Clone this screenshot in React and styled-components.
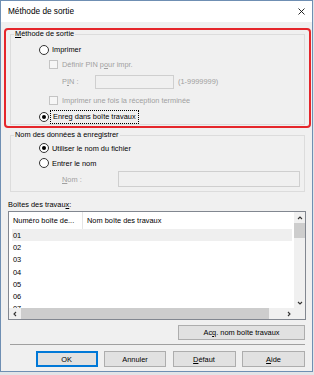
import React from "react";
import styled, { createGlobalStyle } from "styled-components";

const GlobalStyle = createGlobalStyle`
  html, body {
    margin: 0;
    padding: 0;
  }
  body {
    width: 314px;
    height: 375px;
    overflow: hidden;
    background: #e2e4e7;
    font-family: "Liberation Sans", Arial, sans-serif;
  }
  * {
    box-sizing: border-box;
  }
`;

const Window = styled.div`
  width: 313px;
  height: 372px;
  border: 1px solid #6f8fb3;
  background: #f0f0f0;
  display: flex;
  flex-direction: column;
  font-size: 7.4px;
  color: #000;
`;

const TitleBar = styled.div`
  height: 21px;
  flex: none;
  background: #fff;
  display: flex;
  align-items: center;
  justify-content: space-between;
  padding: 0 7px 0 7px;
  font-size: 8.25px;
`;

const Body = styled.div`
  flex: 1;
  display: flex;
  flex-direction: column;
  padding: 6px 6px 0 7px;
`;

const Highlight = styled.div`
  margin: 0 -5px 0 -4px;
  height: 100px;
  border: 2px solid #e5262b;
  border-radius: 4px;
  padding: 0 4px 1px 4px;
`;

const Group = styled.fieldset`
  margin: ${(p) => p.$margin || "0"};
  padding: 0 0 ${(p) => p.$pb || 0}px 0;
  border: 1px solid #dcdcdc;
  min-width: 0;
  display: flex;
  flex-direction: column;
`;

const GroupLabel = styled.legend`
  margin-left: 3px;
  padding: 0 1px;
  font-size: 7.4px;
  line-height: 8px;
`;

const Row = styled.div`
  height: ${(p) => p.$h}px;
  margin-top: ${(p) => p.$mt || 0}px;
  padding-left: ${(p) => p.$indent}px;
  display: flex;
  align-items: center;
  flex: none;
  white-space: nowrap;
  color: ${(p) => (p.$disabled ? "#a0a0a0" : "#000")};
`;

const Radio = styled.span`
  width: 10px;
  height: 10px;
  border-radius: 50%;
  border: 1px solid #333;
  background: #fff;
  display: inline-flex;
  align-items: center;
  justify-content: center;
  flex: none;
  margin-right: 3px;
  &::after {
    content: "";
    width: 4px;
    height: 4px;
    border-radius: 50%;
    background: #000;
    display: ${(p) => (p.$checked ? "block" : "none")};
  }
`;

const Check = styled.span`
  width: 9px;
  height: 9px;
  border: 1px solid #c4c4c4;
  background: #f6f6f6;
  flex: none;
  margin-right: 4px;
`;

const Focus = styled.span`
  outline: 1px dotted #000;
  outline-offset: 1px;
  padding: 0 1px;
  line-height: 10px;
`;

const FieldLabel = styled.span`
  width: ${(p) => p.$w}px;
  flex: none;
`;

const Input = styled.span`
  width: ${(p) => p.$w}px;
  height: ${(p) => p.$h}px;
  border: 1px solid #cfcfcf;
  background: #f0f0f0;
  flex: none;
  margin-right: 4px;
`;

const Key = styled.span`
  text-decoration: underline;
`;

const Caption = styled.div`
  height: 12px;
  margin-top: 6px;
  display: flex;
  align-items: center;
  flex: none;
`;

const ListView = styled.div`
  height: 109px;
  margin-top: 1px;
  flex: none;
  border: 1px solid #828790;
  background: #fff;
  display: grid;
  grid-template-columns: 1fr 11px;
  grid-template-rows: 1fr 11px;
`;

const ListContent = styled.div`
  overflow: hidden;
  padding: 0 2px 0 3px;
`;

const Header = styled.div`
  height: 17px;
  display: flex;
  white-space: nowrap;
`;

const HeaderCell = styled.div`
  width: ${(p) => p.$w}px;
  padding-left: ${(p) => p.$pl}px;
  display: flex;
  align-items: center;
  border-right: ${(p) => (p.$divider ? "1px solid #e5e5e5" : "none")};
  overflow: hidden;
`;

const ListRow = styled.div`
  height: 12.3px;
  padding-left: 1px;
  display: flex;
  align-items: center;
  background: ${(p) => (p.$active ? "#efefef" : "transparent")};
`;

const VScroll = styled.div`
  background: #f0f0f0;
  display: flex;
  flex-direction: column;
`;

const HScroll = styled.div`
  background: #f0f0f0;
  display: grid;
  grid-template-columns: 11px 1fr 11px;
`;

const Arrow = styled.div`
  width: 11px;
  height: 11px;
  display: flex;
  align-items: center;
  justify-content: center;
  flex: none;
`;

const Thumb = styled.div`
  background: #cdcdcd;
  ${(p) =>
    p.$vertical
      ? "height: 15px; width: 11px;"
      : "width: 248px; height: 11px; margin-left: 1px;"}
`;

const Track = styled.div`
  flex: 1;
`;

const Corner = styled.div`
  background: #f0f0f0;
`;

const ButtonRow = styled.div`
  display: flex;
  justify-content: flex-end;
  gap: 6.5px;
  margin-top: ${(p) => p.$mt}px;
  padding-right: 1px;
  flex: none;
`;

const Button = styled.div`
  width: ${(p) => p.$w}px;
  height: ${(p) => p.$h}px;
  border: 1px solid ${(p) => (p.$default ? "#0078d7" : "#adadad")};
  box-shadow: ${(p) => (p.$default ? "inset 0 0 0 1px #0078d7" : "none")};
  background: #e1e1e1;
  display: flex;
  align-items: center;
  justify-content: center;
  white-space: nowrap;
`;

const Separator = styled.div`
  height: 1px;
  margin: 4px 1px 0 2px;
  background: #a0a0a0;
  flex: none;
`;

const Chevron = ({ dir }) => {
  const pts = {
    up: "1,4 3,2 5,4",
    down: "1,2 3,4 5,2",
    left: "4,1 2,3 4,5",
    right: "2,1 4,3 2,5",
  }[dir];
  return (
    <svg width="6" height="6" viewBox="0 0 6 6">
      <polyline points={pts} fill="none" stroke="#333" strokeWidth="1.1" />
    </svg>
  );
};

const rows = ["01", "02", "03", "04", "05", "06", "07"];

export default function App() {
  return (
    <>
      <GlobalStyle />
      <Window>
        <TitleBar>
          <span>Méthode de sortie</span>
          <svg width="7" height="7" viewBox="0 0 7 7">
            <path d="M0.5 0.5L6.5 6.5M6.5 0.5L0.5 6.5" stroke="#111" strokeWidth="0.9" />
          </svg>
        </TitleBar>
        <Body>
          <Highlight>
            <Group>
              <GroupLabel>
                <Key>M</Key>éthode de sortie
              </GroupLabel>
              <Row $h={13} $mt={5} $indent={28}>
                <Radio />
                Imprimer
              </Row>
              <Row $h={16} $indent={38} $disabled>
                <Check />
                Définir PIN p<Key>o</Key>ur impr.
              </Row>
              <Row $h={19} $indent={51} $disabled>
                <FieldLabel $w={33}>
                  P<Key>I</Key>N :
                </FieldLabel>
                <Input $w={79} $h={14} />
                (1-9999999)
              </Row>
              <Row $h={18} $indent={38} $disabled>
                <Check />
                Imprimer une fois la réception terminée
              </Row>
              <Row $h={15} $indent={28}>
                <Radio $checked />
                <Focus>Enreg dans boîte travaux</Focus>
              </Row>
            </Group>
          </Highlight>

          <Group $margin="3px 1px 0 2px" $pb={4}>
            <GroupLabel>Nom des données à enregistrer</GroupLabel>
            <Row $h={14} $mt={2} $indent={28}>
              <Radio $checked />
              Utiliser le nom du fichier
            </Row>
            <Row $h={16} $indent={28}>
              <Radio />
              Entrer le nom
            </Row>
            <Row $h={16} $indent={51} $disabled>
              <FieldLabel $w={56}>
                <Key>N</Key>om :
              </FieldLabel>
              <Input $w={182} $h={16} />
            </Row>
          </Group>

          <Caption>
            Boîtes des travau<Key>x</Key> :
          </Caption>

          <ListView>
            <ListContent>
              <Header>
                <HeaderCell $w={71} $pl={1} $divider>
                  Numéro boîte de...
                </HeaderCell>
                <HeaderCell $w={150} $pl={4}>
                  Nom boîte des travaux
                </HeaderCell>
              </Header>
              {rows.map((r, i) => (
                <ListRow key={r} $active={i === 0}>
                  {r}
                </ListRow>
              ))}
            </ListContent>
            <VScroll>
              <Arrow>
                <Chevron dir="up" />
              </Arrow>
              <Thumb $vertical />
              <Track />
              <Arrow>
                <Chevron dir="down" />
              </Arrow>
            </VScroll>
            <HScroll>
              <Arrow>
                <Chevron dir="left" />
              </Arrow>
              <div>
                <Thumb />
              </div>
              <Arrow>
                <Chevron dir="right" />
              </Arrow>
            </HScroll>
            <Corner />
          </ListView>

          <ButtonRow $mt={5}>
            <Button $w={127} $h={15}>
              Ac<Key>q</Key>. nom boîte travaux
            </Button>
          </ButtonRow>

          <Separator />

          <ButtonRow $mt={6}>
            <Button $w={62} $h={16} $default>
              OK
            </Button>
            <Button $w={62} $h={16}>
              Annuler
            </Button>
            <Button $w={63} $h={16}>
              <Key>D</Key>éfaut
            </Button>
            <Button $w={63} $h={16}>
              <Key>A</Key>ide
            </Button>
          </ButtonRow>
        </Body>
      </Window>
    </>
  );
}
